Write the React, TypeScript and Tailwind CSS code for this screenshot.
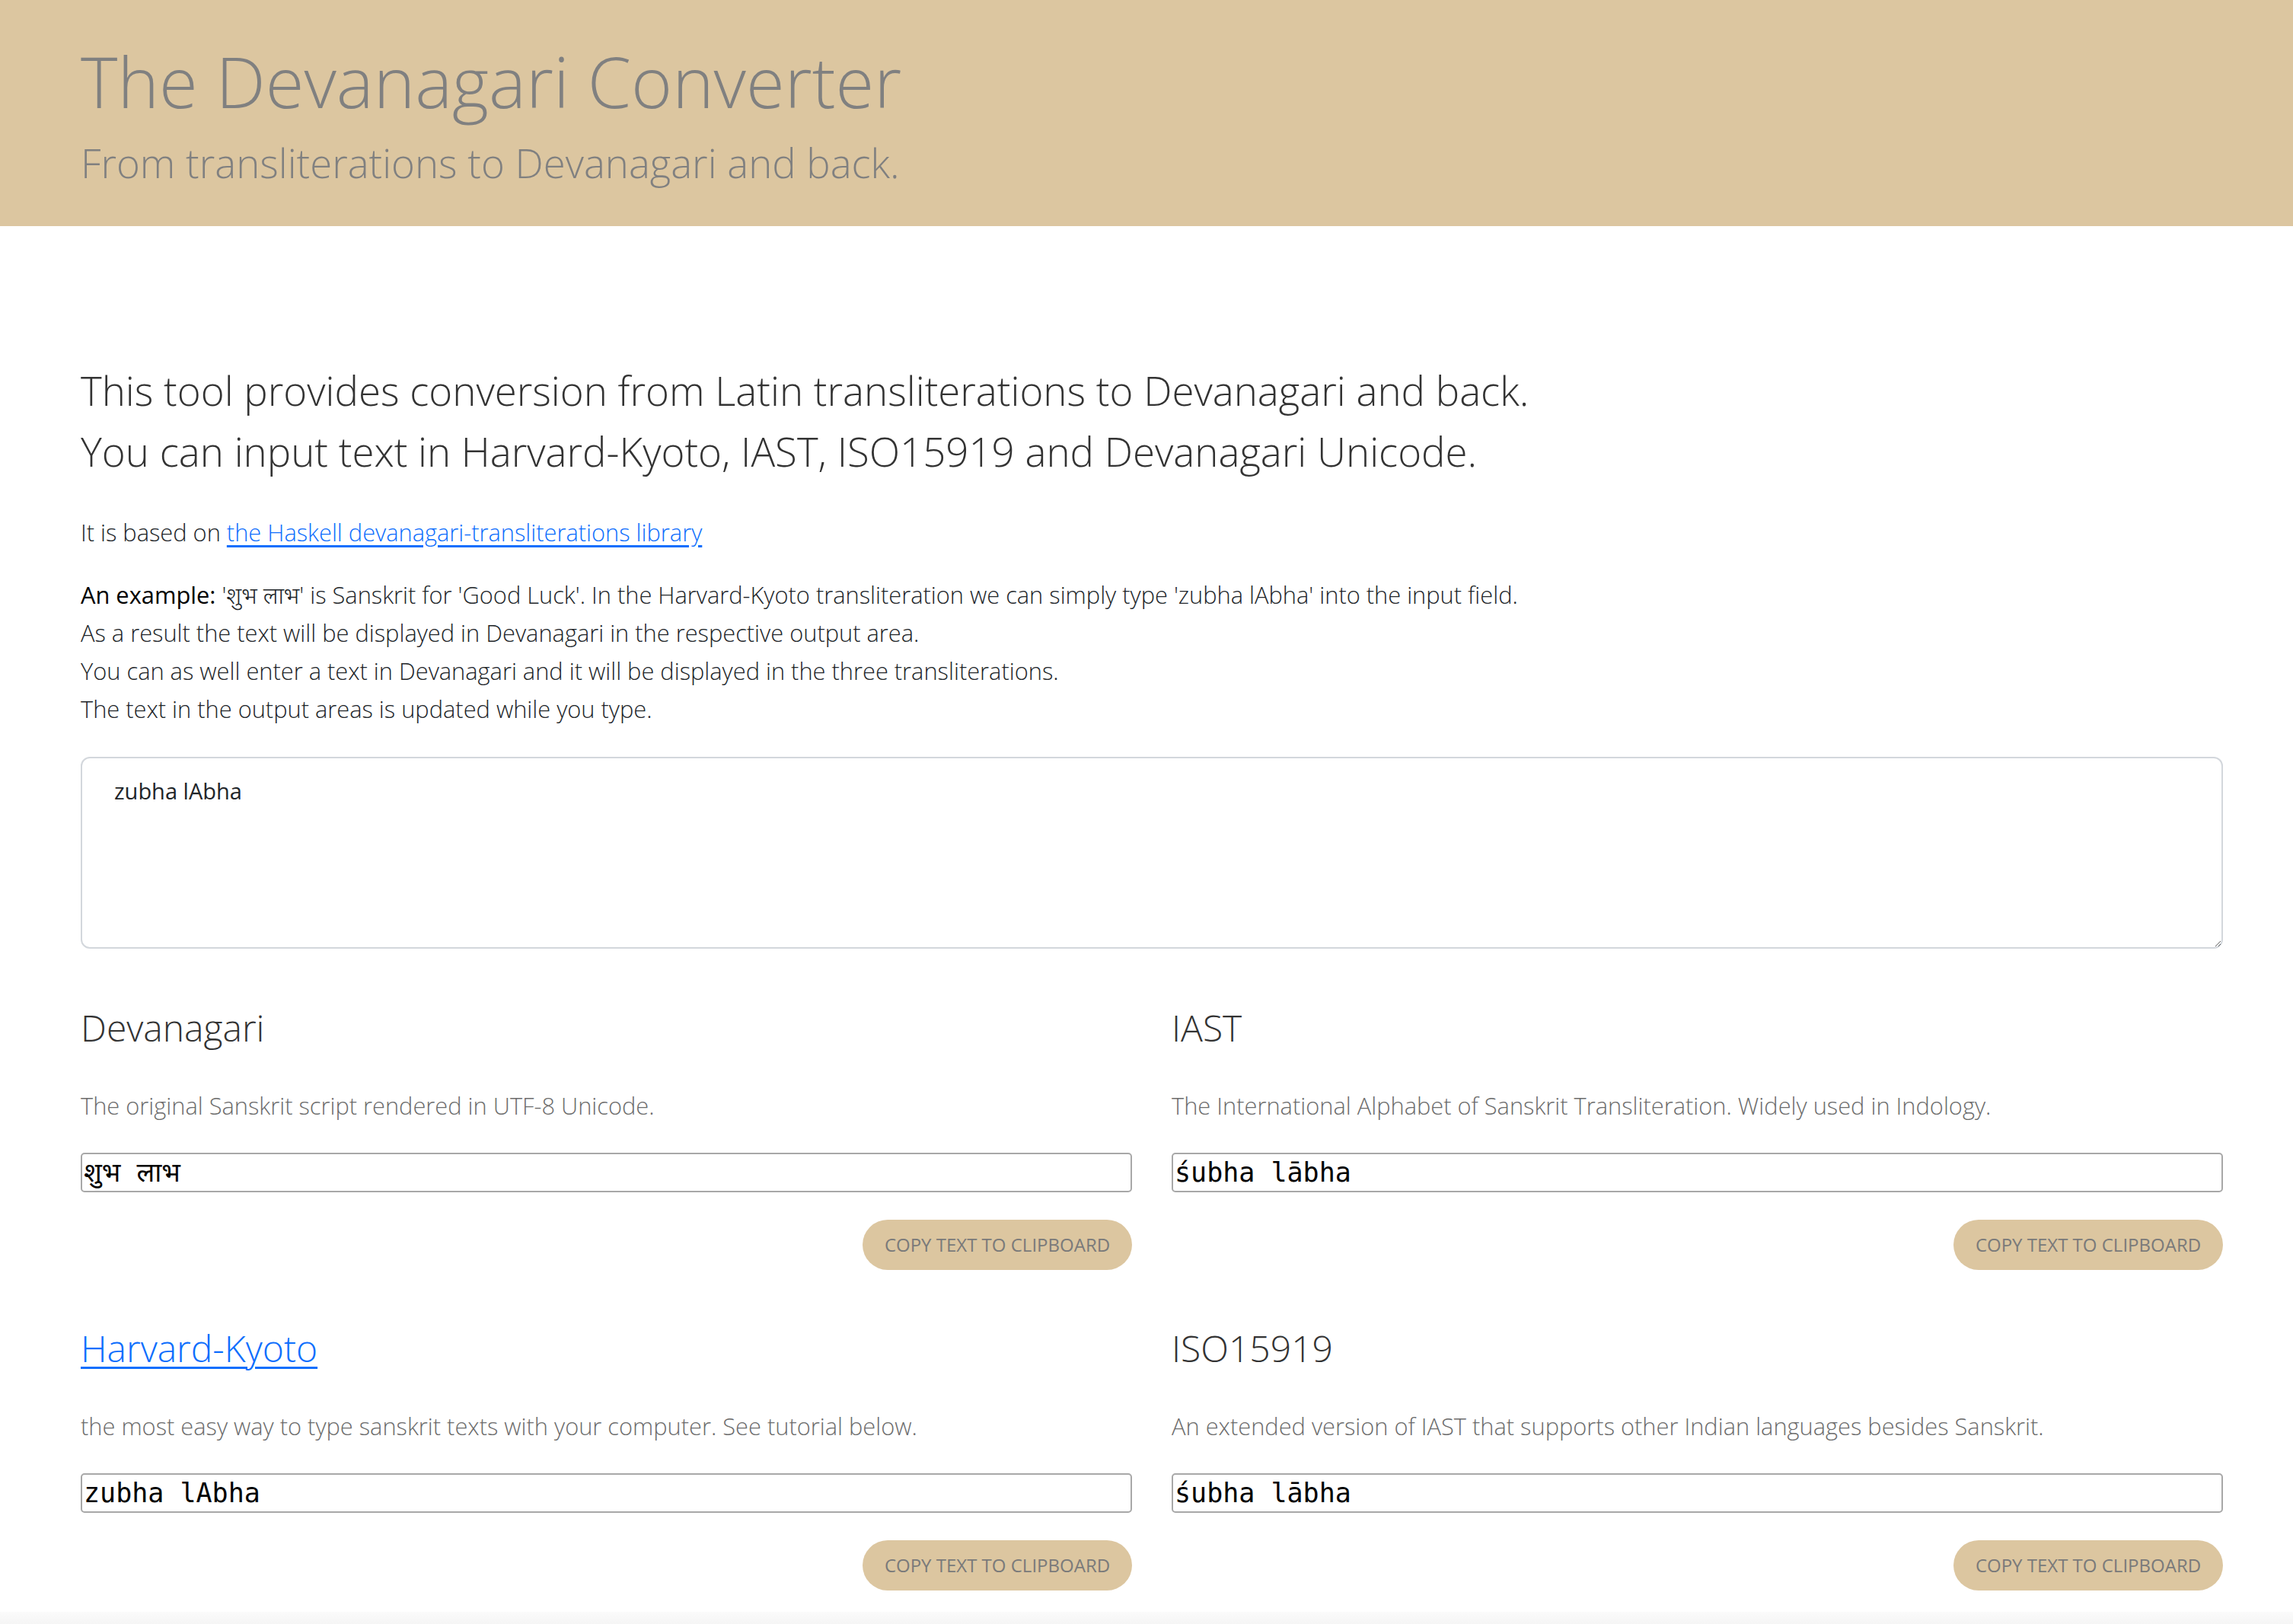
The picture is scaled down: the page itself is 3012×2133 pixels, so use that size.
import React from "react";

const sans = { fontFamily: '"Open Sans", "Noto Sans", sans-serif' };

function Converter({
  title,
  link,
  desc,
  value,
}: {
  title: string;
  link?: boolean;
  desc: string;
  value: string;
}) {
  return (
    <div className="flex flex-col">
      <h3 className="text-[48px] leading-[58px] font-light text-[#333]">
        {link ? (
          <a href="#" className="text-[#0d6efd] underline decoration-[3px] underline-offset-[6px]">
            {title}
          </a>
        ) : (
          title
        )}
      </h3>
      <p className="mt-[48px] text-[30.8px] leading-[50px] font-light text-[#6c6c6c]">{desc}</p>
      <input
        readOnly
        value={value}
        className="mt-[37px] h-[52px] w-full border-2 border-[#a8a8a8] rounded-[5px] px-[2px] text-[35px] text-black outline-none"
        style={{ fontFamily: '"DejaVu Sans Mono", "Noto Sans", monospace' }}
      />
      <div className="mt-[36px] flex justify-end">
        <button className="h-[66px] w-[354px] rounded-[33px] bg-[#dcc6a0] text-[24px] uppercase text-[#7a7a7a] font-normal">
          Copy text to clipboard
        </button>
      </div>
    </div>
  );
}

export default function App() {
  return (
    <div className="min-h-[2133px] bg-white flex flex-col" style={sans}>
      <header className="h-[297px] bg-[#dcc6a0] pl-[106px] pt-[50px]">
        <h1 className="text-[92.3px] leading-[112px] font-light text-[#808080]">The Devanagari Converter</h1>
        <p className="mt-[13px] text-[52.7px] leading-[78px] font-light text-[#808080]">
          From transliterations to Devanagari and back.
        </p>
      </header>

      <main className="px-[106px] pt-[176px] pb-[28px] w-[3026px] max-w-full">
        <p className="text-[52.8px] leading-[80px] font-light text-[#333]">
          This tool provides conversion from Latin transliterations to Devanagari and back.
          <br />
          You can input text in Harvard-Kyoto, IAST, ISO15919 and Devanagari Unicode.
        </p>
        <p className="mt-[41px] text-[30.8px] leading-[50px] font-light text-[#212529]">
          It is based on{" "}
          <a href="#" className="text-[#0d6efd] underline underline-offset-[5px]">
            the Haskell devanagari-transliterations library
          </a>
        </p>
        <p className="mt-[32px] text-[30.8px] leading-[50px] font-light text-[#212529]">
          <span className="font-normal text-black">An example:</span> 'शुभ लाभ' is Sanskrit for 'Good Luck'. In the
          Harvard-Kyoto transliteration we can simply type 'zubha lAbha' into the input field.
          <br />
          As a result the text will be displayed in Devanagari in the respective output area.
          <br />
          You can as well enter a text in Devanagari and it will be displayed in the three transliterations.
          <br />
          The text in the output areas is updated while you type.
        </p>

        <textarea
          defaultValue="zubha lAbha"
          className="mt-[38px] block h-[252px] w-[2814px] rounded-[12px] border-2 border-[#d3d7dc] px-[42px] py-[20px] text-[29px] leading-[45px] font-normal text-[#212529] outline-none"
          style={sans}
        />

        <div className="mt-[75px] grid w-[2814px] grid-cols-2 gap-x-[52px] gap-y-[74px]">
          <Converter
            title="Devanagari"
            desc="The original Sanskrit script rendered in UTF-8 Unicode."
            value="शुभ लाभ"
          />
          <Converter
            title="IAST"
            desc="The International Alphabet of Sanskrit Transliteration. Widely used in Indology."
            value="śubha lābha"
          />
          <Converter
            title="Harvard-Kyoto"
            link
            desc="the most easy way to type sanskrit texts with your computer. See tutorial below."
            value="zubha lAbha"
          />
          <Converter
            title="ISO15919"
            desc="An extended version of IAST that supports other Indian languages besides Sanskrit."
            value="śubha lābha"
          />
        </div>
      </main>
      <footer className="flex-1 bg-gradient-to-b from-[#fbfbfb] to-[#f5f5f5]" />
    </div>
  );
}
